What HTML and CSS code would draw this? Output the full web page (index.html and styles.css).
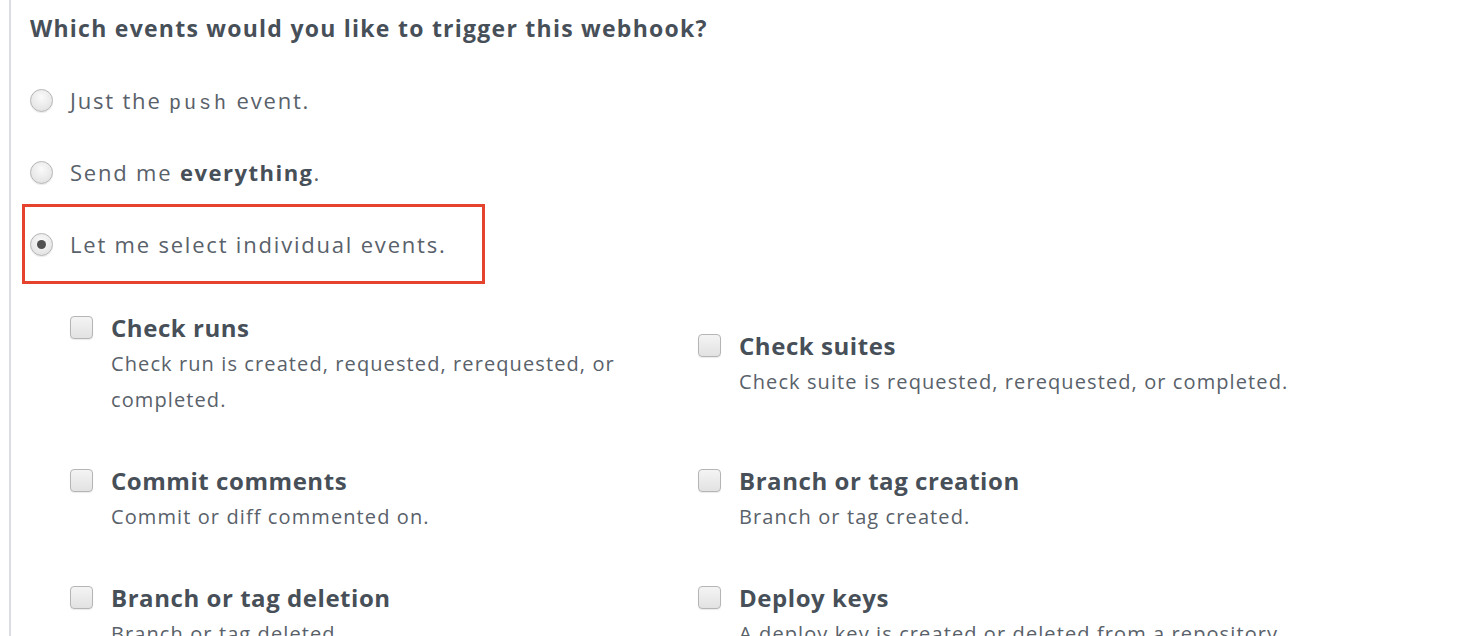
FILE: index.html
```html
<!DOCTYPE html>
<html>
<head>
<meta charset="utf-8">
<link rel="stylesheet" href="styles.css">
</head>
<body>
<div class="panel">
  <h3 class="heading">Which events would you like to trigger this webhook?</h3>
  <div class="radios">
    <label class="radio-row"><span class="radio"></span><span class="radio-text">Just the <code>push</code> event.</span></label>
    <label class="radio-row"><span class="radio"></span><span class="radio-text">Send me <strong>everything</strong>.</span></label>
    <label class="radio-row highlighted"><span class="radio checked"></span><span class="radio-text">Let me select individual events.</span></label>
  </div>
  <div class="events">
    <div class="event"><span class="checkbox"></span><div class="event-body"><div class="event-title">Check runs</div><div class="event-desc">Check run is created, requested, rerequested, or completed.</div></div></div>
    <div class="event"><span class="checkbox"></span><div class="event-body"><div class="event-title">Check suites</div><div class="event-desc">Check suite is requested, rerequested, or completed.</div></div></div>
    <div class="event"><span class="checkbox"></span><div class="event-body"><div class="event-title">Commit comments</div><div class="event-desc">Commit or diff commented on.</div></div></div>
    <div class="event"><span class="checkbox"></span><div class="event-body"><div class="event-title">Branch or tag creation</div><div class="event-desc">Branch or tag created.</div></div></div>
    <div class="event"><span class="checkbox"></span><div class="event-body"><div class="event-title">Branch or tag deletion</div><div class="event-desc">Branch or tag deleted.</div></div></div>
    <div class="event"><span class="checkbox"></span><div class="event-body"><div class="event-title">Deploy keys</div><div class="event-desc">A deploy key is created or deleted from a repository.</div></div></div>
  </div>
</div>
</body>
</html>
```

FILE: styles.css
```css
html, body {
  margin: 0;
  padding: 0;
  background: #ffffff;
  overflow: hidden;
}
body {
  font-family: "Open Sans", "Noto Sans", sans-serif;
  color: #586069;
}
.panel {
  margin-left: 9px;
  width: 1449px;
  height: 700px;
  border-left: 2px solid #dadde1;
  border-right: 2px solid #dadde1;
  padding-left: 19px;
  box-sizing: content-box;
}
.heading {
  margin: 0;
  padding-top: 12px;
  font-size: 23px;
  line-height: 32px;
  font-weight: 700;
  letter-spacing: 1.25px;
  color: #474f58;
}
.radios {
  display: flex;
  flex-direction: column;
  margin-top: 38px;
}
.radio-row {
  display: flex;
  align-items: center;
  gap: 17px;
  height: 72px;
  margin-left: -8px;
  padding-left: 8px;
  margin-top: -24px;
  margin-bottom: 24px;
  width: 455px;
  box-sizing: border-box;
}
.radio-row:first-child { margin-top: -18px; }
.radio-row.highlighted {
  height: 80px;
  margin-top: -28px;
  border: 3px solid #e5432d;
  padding-left: 5px;
  width: 463px;
}
.radio {
  width: 23px;
  height: 23px;
  border-radius: 50%;
  border: 1px solid #b5b5b5;
  background: radial-gradient(circle at 50% 35%, #fafafa 0%, #e6e6e6 70%, #d6d6d6 100%);
  box-shadow: 0 1px 1px rgba(0,0,0,0.08);
  box-sizing: border-box;
  position: relative;
  flex: none;
}
.radio.checked::after {
  content: "";
  position: absolute;
  left: 6px;
  top: 6px;
  width: 9px;
  height: 9px;
  border-radius: 50%;
  background: #505050;
}
.radio-text {
  font-size: 22px;
  color: #59616a;
  letter-spacing: 1.8px;
}
.radio-text code {
  font-family: "Liberation Mono", monospace;
  font-size: 20px;
  letter-spacing: 3px;
}
.radio-text strong {
  color: #474f58;
  letter-spacing: 1.5px;
}
.events {
  display: grid;
  grid-template-columns: 628px 628px;
  margin-left: 40px;
  margin-top: 1px;
  row-gap: 44px;
}
.event {
  display: flex;
  align-items: flex-start;
  align-self: center;
  gap: 18px;
}
.checkbox {
  width: 23px;
  height: 23px;
  border-radius: 4px;
  border: 1px solid #b5b5b5;
  background: linear-gradient(#f4f4f4, #e2e2e2);
  box-sizing: border-box;
  flex: none;
  margin-top: 7px;
  box-shadow: 0 1px 1px rgba(0,0,0,0.08);
}
.event-body {
  width: 560px;
}
.event-title {
  font-size: 24px;
  font-weight: 700;
  line-height: 37px;
  letter-spacing: 0.55px;
  color: #474f58;
}
.event-desc {
  font-size: 20px;
  line-height: 36px;
  letter-spacing: 1.1px;
  color: #59616a;
}
```
